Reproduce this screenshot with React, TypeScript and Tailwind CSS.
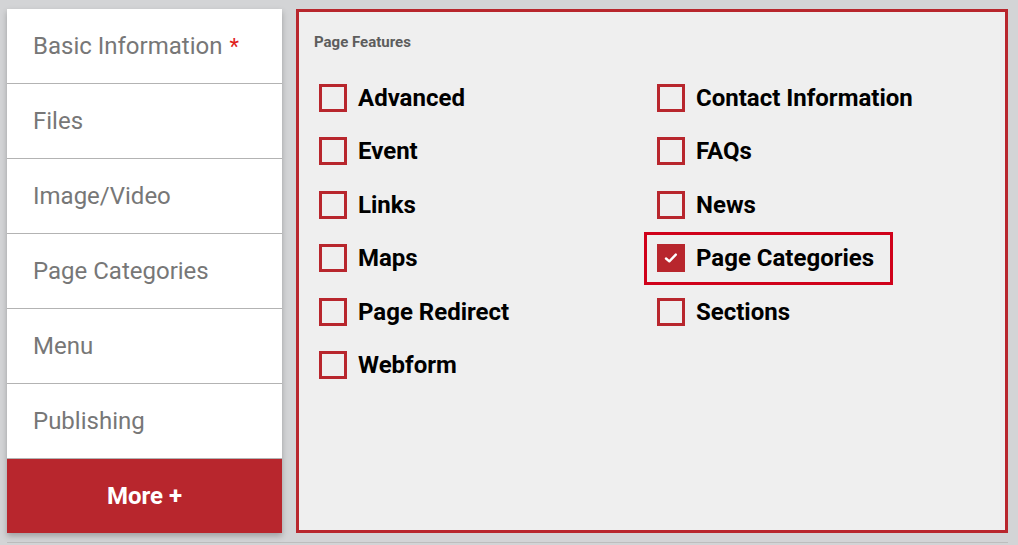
import React, { useState } from "react";

const tabs = ["Basic Information", "Files", "Image/Video", "Page Categories", "Menu", "Publishing"];

const leftFeatures = ["Advanced", "Event", "Links", "Maps", "Page Redirect", "Webform"];
const rightFeatures = ["Contact Information", "FAQs", "News", "Page Categories", "Sections"];

function FeatureBox({ label, checked, focused, onToggle }: { label: string; checked: boolean; focused?: boolean; onToggle: () => void }) {
  return (
    <div className="h-[53.5px] flex items-center">
      <button
        onClick={onToggle}
        className={`flex items-center gap-[11px] h-[53px] pl-[10px] pr-[16px] border-[3px] ${focused ? "border-[#d0021b]" : "border-transparent"}`}
      >
        <span
          className={`w-[28px] h-[28px] border-[3px] border-[#b8262d] flex items-center justify-center ${checked ? "bg-[#b8262d]" : ""}`}
        >
          {checked && (
            <svg width="16" height="16" viewBox="0 0 16 16" fill="none">
              <path d="M3 8.5 L6.3 11.3 L12.8 4.6" stroke="white" strokeWidth="2.4" strokeLinecap="round" strokeLinejoin="round" />
            </svg>
          )}
        </span>
        <span className="text-[24px] font-bold text-black leading-none">{label}</span>
      </button>
    </div>
  );
}

export default function App() {
  const [checked, setChecked] = useState<Record<string, boolean>>({ "Page Categories": true });
  const toggle = (k: string) => setChecked((c) => ({ ...c, [k]: !c[k] }));

  return (
    <div className="w-[1018px] h-[545px] bg-[#d3d4d6] pl-[7px] pt-[9px] pr-[10px] font-['Roboto',sans-serif] relative">
      <div className="flex gap-[14px]">
        {/* Sidebar */}
        <div className="w-[275px] shrink-0 bg-white shadow-[0_3px_6px_rgba(0,0,0,0.25)]">
          {tabs.map((t) => (
            <div key={t} className="h-[75px] border-b border-[#b3b3b3] flex items-center pl-[26px]">
              <span className="text-[24px] text-[#777777]">
                {t}
                {t === "Basic Information" && <span className="text-[#e0201b] ml-[7px] text-[22px]">*</span>}
              </span>
            </div>
          ))}
          <button className="w-full h-[74px] bg-[#b8262d] text-white text-[24px] font-bold flex items-center justify-center">
            More +
          </button>
        </div>

        {/* Features panel */}
        <div className="w-[712px] h-[524px] border-[3px] border-[#b8262d] bg-[#efefef] pt-[20px]">
          <div className="pl-[15px] text-[15px] font-bold text-[#5d5d5d] leading-[20px]">Page Features</div>
          <div className="grid grid-cols-[338px_1fr] mt-[19px] pl-[7px]">
            <div>
              {leftFeatures.map((f) => (
                <FeatureBox key={f} label={f} checked={!!checked["L" + f]} onToggle={() => toggle("L" + f)} />
              ))}
            </div>
            <div>
              {rightFeatures.map((f) => (
                <FeatureBox
                  key={f}
                  label={f}
                  checked={!!checked[f]}
                  focused={f === "Page Categories"}
                  onToggle={() => toggle(f)}
                />
              ))}
            </div>
          </div>
        </div>
      </div>
      <div className="mt-[9px] h-[1px] bg-[#bdbdbd] w-[1001px]" />
    </div>
  );
}
